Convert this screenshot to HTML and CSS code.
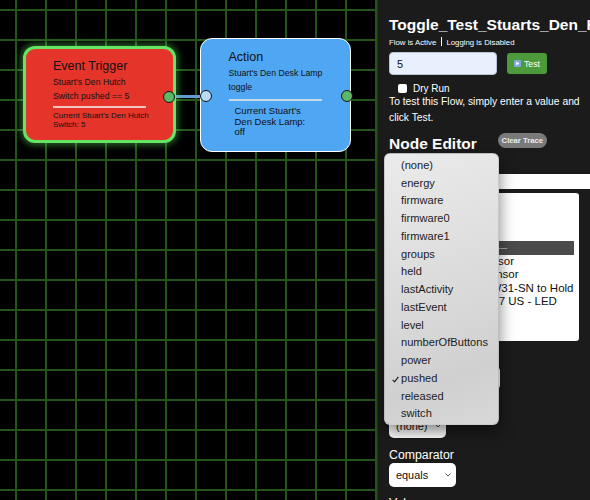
FILE: index.html
```html
<!DOCTYPE html>
<html lang="en">
<head>
  <meta charset="UTF-8">
  <title>Flow Editor</title>
  <link rel="stylesheet" href="styles.css">
</head>
<body>
<div class="app">
  <div class="canvas">
    <div class="wire"></div>

    <div class="node trigger">
      <div class="node-title">Event Trigger</div>
      <div class="node-line first">Stuart's Den Hutch</div>
      <div class="node-line">Switch pushed == 5</div>
      <div class="node-rule"></div>
      <div class="node-state">Current Stuart's Den Hutch<br>Switch: 5</div>
      <span class="port port-out"></span>
    </div>

    <div class="node action">
      <div class="node-title">Action</div>
      <div class="node-line first">Stuart's Den Desk Lamp</div>
      <div class="node-line">toggle</div>
      <div class="node-rule"></div>
      <div class="node-state">Current Stuart's Den Desk Lamp: off</div>
      <span class="port port-in"></span>
      <span class="port port-out"></span>
    </div>
  </div>

  <div class="panel">
    <h2 class="flow-title">Toggle_Test_Stuarts_Den_Hutch</h2>
    <div class="flow-status">Flow is Active<span class="sep"></span>Logging is Disabled</div>

    <div class="test-row">
      <input class="test-value" type="text" value="5">
      <button class="btn-test">
        <svg width="7" height="7" viewBox="0 0 7 7"><rect width="7" height="7" rx="1" fill="#7fa9dc"/><path d="M2.2 1.6 L5.4 3.5 L2.2 5.4 Z" fill="#fff"/></svg>
        Test
      </button>
    </div>

    <label class="dry-run"><input class="checkbox" type="checkbox">Dry Run</label>
    <p class="hint">To test this Flow, simply enter a value and click Test.</p>

    <div class="editor-head">
      <h2>Node Editor</h2>
      <button class="btn-trace">Clear Trace</button>
    </div>

    <div class="field first-field">
      <label class="field-label">Devices</label>
      <input class="filter" type="text">
    </div>

    <div class="device-list">
      <div class="options">
        <div class="option">Den Hutch</div>
        <div class="option">Desk Lamp</div>
        <div class="option">Den Lights</div>
        <div class="option divider">——————————</div>
        <div class="option">Den Bed Motion Sensor</div>
        <div class="option">Den Bay Contact Sensor</div>
        <div class="option">Set Den Inovelli VZW31-SN to Hold</div>
        <div class="option">Den Hutch Dimmers 7 US - LED</div>
        <div class="option">Den Fan</div>
        <div class="option">Den TV</div>
        <div class="option">Hall Light</div>
      </div>
      <div class="scrollbar"><div class="thumb"></div></div>
    </div>

    <div class="field">
      <label class="field-label">Attribute</label>
      <div class="select select-attr">pushed</div>
    </div>

    <div class="field">
      <label class="field-label">Type</label>
      <div class="select select-type">(none)
        <svg width="6" height="4" viewBox="0 0 6 4"><path d="M0.5 0.5 L3 3 L5.5 0.5" fill="none" stroke="#555" stroke-width="1"/></svg>
      </div>
    </div>

    <div class="field">
      <label class="field-label">Comparator</label>
      <div class="select select-comp">equals
        <svg width="6" height="4" viewBox="0 0 6 4"><path d="M0.5 0.5 L3 3 L5.5 0.5" fill="none" stroke="#555" stroke-width="1"/></svg>
      </div>
    </div>

    <div class="field">
      <label class="field-label">Value</label>
    </div>
  </div>

  <!-- open attribute menu -->
  <div class="menu">
    <div class="menu-item">(none)</div>
    <div class="menu-item">energy</div>
    <div class="menu-item">firmware</div>
    <div class="menu-item">firmware0</div>
    <div class="menu-item">firmware1</div>
    <div class="menu-item">groups</div>
    <div class="menu-item">held</div>
    <div class="menu-item">lastActivity</div>
    <div class="menu-item">lastEvent</div>
    <div class="menu-item">level</div>
    <div class="menu-item">numberOfButtons</div>
    <div class="menu-item">power</div>
    <div class="menu-item checked">
      <svg class="check" width="7" height="7" viewBox="0 0 7 7"><path d="M0.7 3.8 L2.6 5.9 L6.3 0.8" fill="none" stroke="#222" stroke-width="1.2"/></svg>
      pushed
    </div>
    <div class="menu-item">released</div>
    <div class="menu-item">switch</div>
  </div>
</div>
</body>
</html>
```

FILE: styles.css
```css
* {
  margin: 0;
  padding: 0;
  box-sizing: border-box;
}

body {
  width: 590px;
  height: 500px;
  overflow: hidden;
  background: #1b1b1b;
  font-family: 'Liberation Sans', Arial, sans-serif;
}

.app {
  display: flex;
  height: 500px;
  position: relative;
}

/* flow canvas */

.canvas {
  width: 378px;
  flex: none;
  height: 100%;
  position: relative;
  background-color: #000;
  background-image:
    linear-gradient(to right, #245519 2px, transparent 2px),
    linear-gradient(to bottom, #245519 2px, transparent 2px);
  background-size: 30px 30px;
  background-position: 15px 9px;
  border-right: 1px solid #2a2a2a;
}

.wire {
  position: absolute;
  left: 172px;
  top: 95px;
  width: 32px;
  height: 3px;
  background: #5f9bd6;
}

.node {
  position: absolute;
  border-radius: 12px;
  color: #111;
}

.trigger {
  left: 23px;
  top: 46px;
  width: 153px;
  height: 97px;
  background: #e5352b;
  border: 3px solid #64e564;
  box-shadow: 0 0 7px 2px rgba(100, 229, 100, 0.45);
  padding: 10px 0 0 27px;
}

.action {
  left: 200px;
  top: 38px;
  width: 151px;
  height: 114px;
  background: #4fa6f3;
  border: 1.5px solid #fff;
  padding: 11px 0 0 27.5px;
}

.node-title {
  font-size: 12.5px;
  line-height: 15px;
}

.node-line {
  font-size: 8.7px;
  line-height: 14px;
}

.node-line.first {
  margin-top: 1px;
}

.node-rule {
  width: 93px;
  height: 2px;
  margin-top: 3px;
  background: #f2c3bf;
}

.action .node-rule {
  margin-top: 5px;
  background: #c8d7e4;
}

.node-state {
  font-size: 8px;
  line-height: 9px;
  margin-top: 3px;
}

.action .node-state {
  font-size: 9.5px;
  line-height: 10.5px;
  width: 82px;
  margin: 5px 0 0 6px;
}

.port {
  position: absolute;
  width: 12px;
  height: 12px;
  border-radius: 50%;
  border: 1.5px solid #111;
  background: #5cb866;
}

.trigger .port-out {
  right: -2px;
  top: 41.5px;
}

.action .port-in {
  left: -1.5px;
  top: 51px;
  background: #b5dbf7;
}

.action .port-out {
  right: -2.5px;
  top: 51px;
}

/* side panel */

.panel {
  flex: 1;
  min-width: 0;
  overflow: hidden;
  padding: 16px 0 0 11px;
  color: #fff;
}

.flow-title {
  font-size: 15.5px;
  font-weight: bold;
  line-height: 18px;
  white-space: nowrap;
}

.flow-status {
  font-size: 7.8px;
  line-height: 10px;
  margin-top: 2.5px;
  white-space: nowrap;
}

.sep {
  display: inline-block;
  width: 1.2px;
  height: 9px;
  background: #fff;
  margin: 0 4px 0 5px;
  vertical-align: -1px;
}

.test-row {
  display: flex;
  gap: 10px;
  margin-top: 4.5px;
}

.test-value {
  width: 108px;
  height: 23px;
  border: 1px solid #b8c4d8;
  border-radius: 4px;
  background: #e8effd;
  color: #111;
  font-family: inherit;
  font-size: 11px;
  padding-left: 7px;
  outline: none;
}

.btn-test {
  width: 40px;
  height: 21px;
  margin-top: 1px;
  border: none;
  border-radius: 3px;
  background: #4d9a3c;
  color: #fff;
  font-family: inherit;
  font-size: 8.7px;
  display: flex;
  align-items: center;
  justify-content: center;
  gap: 3px;
}

.dry-run {
  display: flex;
  align-items: center;
  gap: 6px;
  height: 12px;
  margin: 7px 0 0 9px;
  font-size: 10px;
}

.checkbox {
  appearance: none;
  width: 9px;
  height: 9px;
  background: #fff;
  border-radius: 2px;
  margin: 0;
}

.hint {
  width: 200px;
  font-size: 10.3px;
  line-height: 16px;
}

.editor-head {
  display: flex;
  align-items: flex-start;
  gap: 21px;
  margin-top: 7px;
}

.editor-head h2 {
  font-size: 15.5px;
  font-weight: bold;
  line-height: 18px;
  margin-top: 1.5px;
}

.btn-trace {
  width: 49px;
  height: 15px;
  border: none;
  border-radius: 7.5px;
  background: #7a7a7a;
  color: #eee;
  font-family: inherit;
  font-size: 7.7px;
  font-weight: bold;
}

.field {
  margin-top: 9.5px;
}

.field.first-field {
  margin-top: 6.5px;
}

.field-label {
  display: block;
  font-size: 12.3px;
  line-height: 15px;
}

.filter {
  display: block;
  width: 230px;
  height: 15px;
  border: none;
  background: #fff;
}

.device-list {
  display: flex;
  width: 190px;
  height: 148px;
  margin-top: 4px;
  background: #fff;
  border-radius: 3px;
  overflow: hidden;
  color: #111;
}

.options {
  flex: 1;
  padding-top: 7.5px;
  font-size: 11.5px;
}

.option {
  height: 13.5px;
  line-height: 13.5px;
  padding-left: 3px;
  white-space: nowrap;
  overflow: hidden;
}

.option.divider {
  background: #4b4b4b;
  color: #b5b5b5;
}

.scrollbar {
  width: 15px;
  padding: 2px 0 0 7px;
}

.thumb {
  width: 5px;
  height: 12px;
  border-radius: 3px;
  background: #b9b9b9;
}

.select {
  display: flex;
  align-items: center;
  justify-content: space-between;
  height: 24px;
  background: #fff;
  border-radius: 5px;
  color: #111;
  font-size: 10.9px;
  padding: 0 5px 0 7px;
}

.select-attr {
  width: 111px;
}

.select-type {
  width: 57px;
}

.select-comp {
  width: 67px;
}

/* open dropdown menu */

.menu {
  position: absolute;
  left: 384px;
  top: 153px;
  width: 115px;
  height: 272px;
  padding: 3px 0;
  border-radius: 6px;
  border: 1px solid rgba(0, 0, 0, 0.12);
  background: linear-gradient(160deg, #ebebeb 0%, #d9d9d9 55%, #d0d0d0 80%, #d8d8d8 100%);
  box-shadow: 0 6px 16px rgba(0, 0, 0, 0.5);
  color: #1c1c1c;
  font-size: 11.1px;
}

.menu-item {
  position: relative;
  height: 17.74px;
  line-height: 17.74px;
  padding-left: 16px;
  white-space: nowrap;
}

.check {
  position: absolute;
  left: 7px;
  top: 6px;
}
```
